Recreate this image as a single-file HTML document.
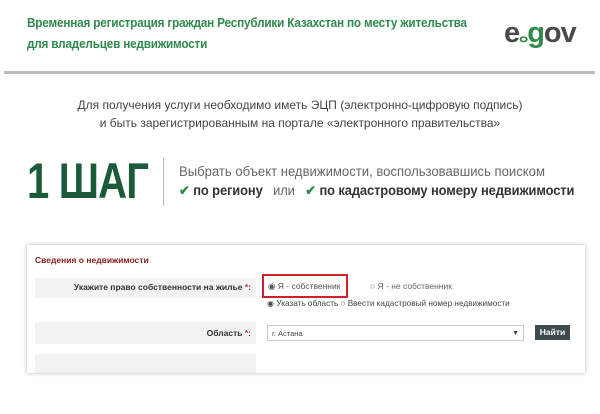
<!DOCTYPE html>
<html><head><meta charset="utf-8"><style>
body{margin:0;width:600px;height:414px;background:#fff;position:relative;overflow:hidden;font-family:"Liberation Sans",sans-serif}
.a{position:absolute;white-space:nowrap}
.h{color:#2f8a4c;font-weight:bold;font-size:12.5px;letter-spacing:-0.2px;transform:scaleX(0.94);transform-origin:left}
</style></head><body>
<div class="a h" style="left:27px;top:16px">Временная регистрация граждан Республики Казахстан по месту жительства</div>
<div class="a h" style="left:27px;top:37px">для владельцев недвижимости</div>
<div class="a" style="left:504px;top:17px;font-size:29px;font-weight:bold;color:#4a4a4a;letter-spacing:-1px">e<span style="font-size:14px;color:#2f8a4c">ⴰ</span><span style="color:#2f8a4c">g</span>ov</div>
<div class="a" style="left:4px;top:71px;width:591px;height:3px;background:#bdbdbd"></div>
<div class="a" style="left:0;width:600px;top:96px;text-align:center;font-size:12px;line-height:18px;color:#444">Для получения услуги необходимо иметь ЭЦП (электронно-цифровую подпись)<br>и быть зарегистрированным на портале «электронного правительства»</div>
<div class="a" style="left:27px;top:152px;font-size:50px;font-weight:bold;color:#1c5b3a;transform:scaleX(0.8);transform-origin:left;letter-spacing:-1px">1 ШАГ</div>
<div class="a" style="left:163px;top:158px;width:1px;height:48px;background:#bbb"></div>
<div class="a" style="left:179px;top:164px;font-size:13.5px;color:#666;transform:scaleX(0.97);transform-origin:left">Выбрать объект недвижимости, воспользовавшись поиском</div>
<div class="a" style="left:179px;top:183px;font-size:13.5px;color:#666;letter-spacing:-0.1px;transform:scaleX(0.955);transform-origin:left"><b style="color:#2f8a4c">✔</b> <b style="color:#333">по региону</b> &nbsp; или &nbsp; <b style="color:#2f8a4c">✔</b> <b style="color:#333">по кадастровому номеру недвижимости</b></div>
<div class="a" style="left:27px;top:245px;width:558px;height:128px;background:#fff;box-shadow:0 0 4px rgba(0,0,0,.3)"></div>
<div class="a" style="left:35px;top:255px;font-size:8.5px;font-weight:bold;color:#8a1c1c">Сведения о недвижимости</div>
<div class="a" style="left:35px;top:278px;width:221px;height:20px;background:#f2f2f2"></div>
<div class="a" style="left:35px;top:282px;width:216px;text-align:right;font-size:8.5px;font-weight:bold;color:#333">Укажите право собственности на жилье <span style="color:#c33">*</span>:</div>
<div class="a" style="left:262px;top:274px;width:82px;height:20px;border:2px solid #d0202a"></div>
<div class="a" style="left:268px;top:281px;font-size:8.5px;color:#555">◉ Я - собственник</div>
<div class="a" style="left:370px;top:281px;font-size:8.5px;color:#666">○ Я - не собственник</div>
<div class="a" style="left:267px;top:298px;font-size:8.2px;color:#444">◉ Указать область ○ Ввести кадастровый номер недвижимости</div>
<div class="a" style="left:35px;top:322px;width:221px;height:22px;background:#f2f2f2"></div>
<div class="a" style="left:35px;top:328px;width:216px;text-align:right;font-size:8.5px;font-weight:bold;color:#333">Область <span style="color:#c33">*</span>:</div>
<div class="a" style="left:267px;top:325px;width:257px;height:16px;border:1px solid #ccc;font-size:7.5px;color:#444;line-height:16px;box-sizing:border-box;padding-left:4px">г. Астана<span style="position:absolute;right:4px;font-size:7px">▼</span></div>
<div class="a" style="left:535px;top:325px;width:35px;height:15px;background:#3e4a4f;color:#fff;font-size:8.5px;font-weight:bold;text-align:center;line-height:15px">Найти</div>
<div class="a" style="left:35px;top:354px;width:221px;height:19px;background:#f2f2f2"></div>
</body></html>
